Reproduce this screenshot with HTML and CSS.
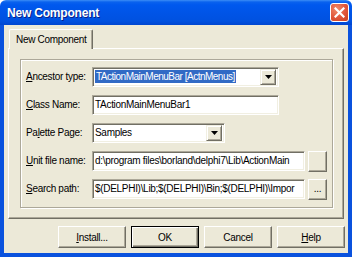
FILE: index.html
```html
<!DOCTYPE html>
<html>
<head>
<meta charset="utf-8">
<link rel="stylesheet" href="styles.css">
</head>
<body>
<div class="window">
  <div class="titlebar">
    <span class="title">New Component</span>
    <div class="close">
      <svg width="11" height="11" viewBox="0 0 11 11"><path d="M1.5 1.5 L9.5 9.5 M9.5 1.5 L1.5 9.5" stroke="#fff" stroke-width="2.2" stroke-linecap="square"/></svg>
    </div>
  </div>
  <div class="frame">
    <div class="client">
      <div class="tabs"><div class="tab">New Component</div></div>
      <div class="panel">
        <div class="group">
          <div class="row">
            <label class="lbl"><u>A</u>ncestor type:</label>
            <div class="field combo w-anc">
              <span class="value"><span class="sel">TActionMainMenuBar [ActnMenus]</span></span>
              <span class="drop"><svg width="7" height="4" viewBox="0 0 7 4"><path d="M0 0H7L3.5 4Z" fill="#000"/></svg></span>
            </div>
          </div>
          <div class="row">
            <label class="lbl"><u>C</u>lass Name:</label>
            <div class="field w-anc"><span class="value">TActionMainMenuBar1</span></div>
          </div>
          <div class="row">
            <label class="lbl">Pa<u>l</u>ette Page:</label>
            <div class="field combo w-pal">
              <span class="value">Samples</span>
              <span class="drop"><svg width="7" height="4" viewBox="0 0 7 4"><path d="M0 0H7L3.5 4Z" fill="#000"/></svg></span>
            </div>
          </div>
          <div class="row">
            <label class="lbl"><u>U</u>nit file name:</label>
            <div class="field w-path"><span class="value">d:\program files\borland\delphi7\Lib\ActionMain</span></div>
            <div class="btn small"></div>
          </div>
          <div class="row">
            <label class="lbl"><u>S</u>earch path:</label>
            <div class="field w-path"><span class="value">$(DELPHI)\Lib;$(DELPHI)\Bin;$(DELPHI)\Impor</span></div>
            <div class="btn small">...</div>
          </div>
        </div>
      </div>
      <div class="buttons">
        <div class="btn"><span><u>I</u>nstall...</span></div>
        <div class="btn default"><span>OK</span></div>
        <div class="btn"><span>Cancel</span></div>
        <div class="btn"><span><u>H</u>elp</span></div>
      </div>
    </div>
  </div>
</div>
</body>
</html>
```
FILE: styles.css
```css
html, body {
  margin: 0;
  padding: 0;
  background: #fff;
}
.window {
  width: 352px;
  height: 257px;
  display: flex;
  flex-direction: column;
  font-family: "Liberation Sans", Arial, sans-serif;
  font-size: 10px;
  letter-spacing: -0.3px;
  color: #000;
}
.titlebar {
  height: 25px;
  flex: none;
  display: flex;
  align-items: center;
  justify-content: space-between;
  padding: 0 3px 0 7px;
  box-sizing: border-box;
  background: linear-gradient(#3c8df6 0, #0a62ee 2px, #0058ee 5px, #0054e6 14px, #0051e0 21px, #0046d0 25px);
  border-radius: 6px 6px 0 0;
}
.title {
  color: #fff;
  font-weight: bold;
  font-size: 12px;
  letter-spacing: -0.2px;
  text-shadow: 1px 1px 0 #0a1f85;
  padding-top: 1px;
}
.close {
  width: 17px;
  height: 17px;
  border: 1px solid #fff;
  border-radius: 3px;
  background: radial-gradient(circle at 35% 30%, #f08a6a 0, #e0553a 55%, #c8401f 100%);
  display: flex;
  align-items: center;
  justify-content: center;
}
.frame {
  flex: 1;
  display: flex;
  padding: 0 4px 4px 4px;
  background: #0a52de;
}
.client {
  flex: 1;
  background: #ece9d8;
  display: flex;
  flex-direction: column;
  padding-top: 4px;
}
.tabs {
  height: 19px;
  display: flex;
  padding-left: 5px;
  position: relative;
  z-index: 1;
}
.tab {
  width: 84px;
  height: 20px;
  box-sizing: border-box;
  background: #ece9d8;
  border-top: 1px solid #fff;
  border-left: 1px solid #fff;
  border-right: 1px solid #716f64;
  box-shadow: inset -1px 0 0 #aca899;
  border-radius: 2px 2px 0 0;
  padding: 4px 0 0 6px;
}
.panel {
  margin: 0 4px;
  height: 171px;
  box-sizing: border-box;
  border: 1px solid;
  border-color: #fff #716f64 #716f64 #fff;
  box-shadow: inset -1px -1px 0 #aca899;
  padding: 10px 10px 10px 11px;
  display: flex;
}
.group {
  flex: 1;
  border: 1px solid #aca899;
  box-shadow: 1px 1px 0 #fff, inset 1px 1px 0 #fff;
  display: flex;
  flex-direction: column;
  gap: 8px;
  padding: 7px 0 0 5px;
}
.row {
  display: flex;
  align-items: flex-start;
  height: 20px;
}
.lbl {
  width: 66px;
  flex: none;
  line-height: 20px;
  white-space: nowrap;
}
.field {
  height: 20px;
  box-sizing: border-box;
  background: #fff;
  border: 1px solid;
  border-color: #aca899 #fff #fff #aca899;
  box-shadow: inset 1px 1px 0 #716f64, inset -1px -1px 0 #f1efe2;
  display: flex;
  align-items: center;
  overflow: hidden;
  padding: 0 2px 0 1px;
  white-space: nowrap;
}
.value {
  flex: 1;
  overflow: hidden;
  white-space: nowrap;
  line-height: 14px;
  padding-left: 1px;
}
.sel {
  background: #316ac5;
  color: #fff;
  padding: 1px 1px;
  letter-spacing: -0.5px;
}
.w-anc { width: 187px; }
.w-pal { width: 133px; }
.w-path { width: 213px; }
.combo {
  padding-right: 2px;
}
.drop {
  width: 16px;
  height: 16px;
  flex: none;
  box-sizing: border-box;
  background: #ece9d8;
  border: 1px solid;
  border-color: #f1efe2 #716f64 #716f64 #f1efe2;
  box-shadow: inset 1px 1px 0 #fff, inset -1px -1px 0 #aca899;
  display: flex;
  align-items: center;
  justify-content: center;
}
.btn {
  width: 68px;
  height: 22px;
  box-sizing: border-box;
  background: #ece9d8;
  border: 1px solid;
  border-color: #fff #716f64 #716f64 #fff;
  box-shadow: inset -1px -1px 0 #aca899;
  display: flex;
  align-items: center;
  justify-content: center;
}
.btn.small {
  width: 19px;
  height: 21px;
  margin-left: 3px;
  padding-bottom: 2px;
}
.btn.default {
  border: 1px solid #000;
  box-shadow: inset 1px 1px 0 #fff, inset -1px -1px 0 #716f64, inset -2px -2px 0 #aca899;
}
.buttons {
  display: flex;
  justify-content: flex-end;
  gap: 5px;
  margin-top: 7px;
  padding-right: 3px;
}
u {
  text-decoration: underline;
  text-underline-offset: 1px;
}
```
